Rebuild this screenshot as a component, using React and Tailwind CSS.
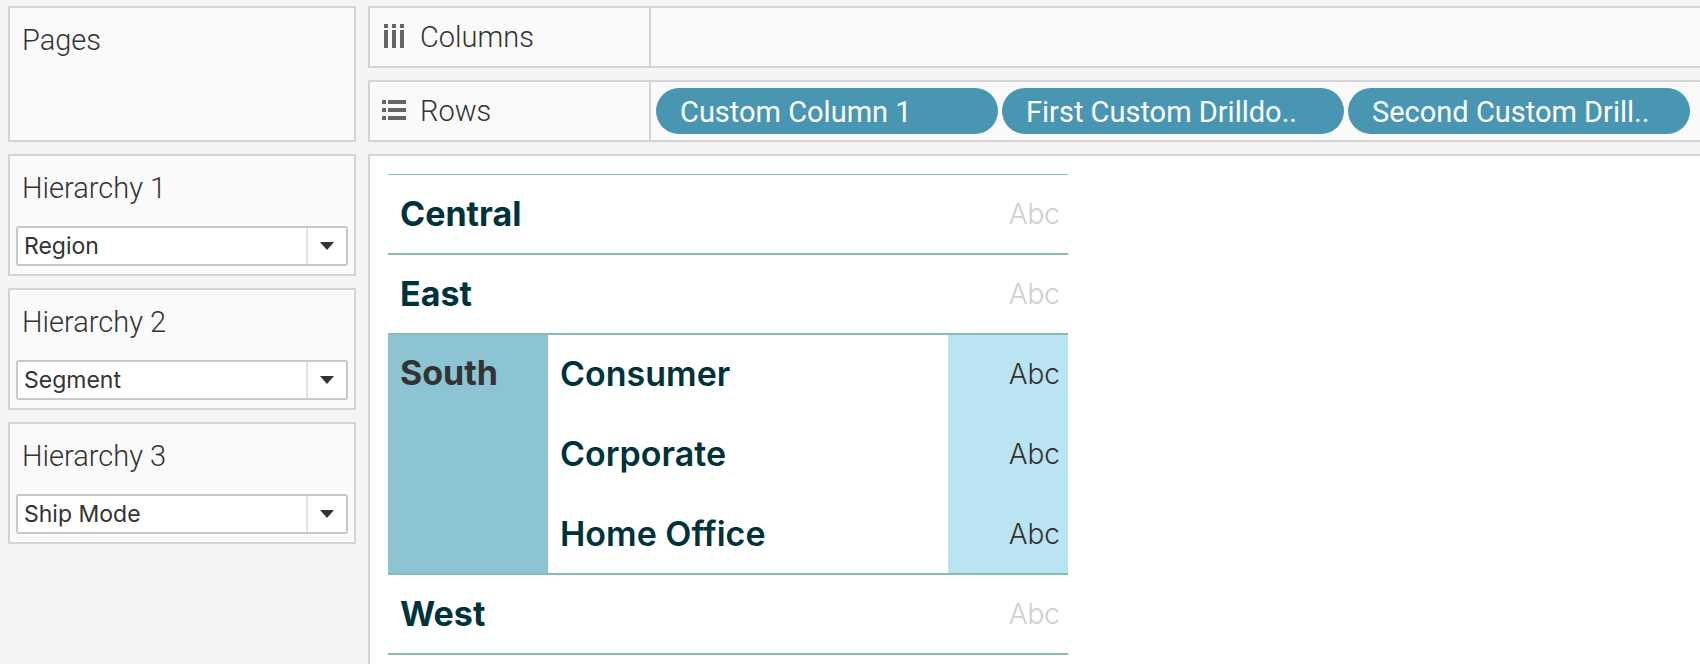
import React, { useState } from "react";

const filters = [
  {
    id: "hierarchy-1",
    label: "Hierarchy 1",
    value: "Region",
  },
  {
    id: "hierarchy-2",
    label: "Hierarchy 2",
    value: "Segment",
  },
  {
    id: "hierarchy-3",
    label: "Hierarchy 3",
    value: "Ship Mode",
  },
];

const options = ["Region", "Segment", "Ship Mode"];

const pills = [
  "Custom Column 1",
  "First Custom Drilldo..",
  "Second Custom Drill..",
];

const regions = [
  { name: "Central", segments: [] },
  { name: "East", segments: [] },
  { name: "South", segments: ["Consumer", "Corporate", "Home Office"] },
  { name: "West", segments: [] },
];

const ColumnsIcon = () => (
  <svg className="w-6 h-6 shrink-0" viewBox="0 0 24 24" fill="#636666">
    <path d="M2 0h4v4H2zM10 0h4v4h-4zM18 0h4v4h-4zM2 6h4v18H2zM10 6h4v18h-4zM18 6h4v18h-4z" />
  </svg>
);

const RowsIcon = () => (
  <svg className="w-6 h-6 shrink-0" viewBox="0 0 24 24" fill="#636666">
    <path d="M0 2h4v4H0zM0 10h4v4H0zM0 18h4v4H0zM6 2h18v4H6zM6 10h18v4H6zM6 18h18v4H6z" />
  </svg>
);

const Shelf = ({ icon, title, children }) => (
  <section className="flex h-[62px] border-2 border-r-0 border-[#d4d4d4] bg-[#fafafa]">
    <div className="flex w-[281px] shrink-0 items-center gap-3.5 border-r-2 border-[#d4d4d4] pb-0.5 pl-3">
      {icon}
      <h2 className="pt-0.5 text-[29px] leading-8 font-light">{title}</h2>
    </div>
    <div className="flex min-w-0 items-center gap-1 pl-[5px]">{children}</div>
  </section>
);

const FilterCard = ({ id, label, value }) => {
  const [selected, setSelected] = useState(value);

  return (
    <section className="border-2 border-[#d4d4d4] bg-[#fafafa] px-1.5 pb-2">
      <label
        htmlFor={id}
        className="block px-1.5 pt-4 pb-[22px] text-[29px] leading-8 font-light"
      >
        {label}
      </label>
      <div className="relative">
        <select
          id={id}
          value={selected}
          onChange={(e) => setSelected(e.target.value)}
          className="block h-10 w-full appearance-none rounded-[3px] border-2 border-[#c8c8c8] bg-white pr-12 pl-1.5 font-['Inter',sans-serif] text-[23px]"
        >
          {options.map((option) => (
            <option key={option}>{option}</option>
          ))}
        </select>
        {/* Arrow */}
        <div className="pointer-events-none absolute inset-y-0.5 right-0.5 flex w-10 items-center justify-center border-l-2 border-[#e2e2e2]">
          <svg className="h-2 w-3.5" viewBox="0 0 14 8" fill="#333333">
            <path d="M0 0h14L7 8z" />
          </svg>
        </div>
      </div>
    </section>
  );
};

const RegionRows = ({ name, segments }) => {
  if (segments.length === 0) {
    return (
      <tr className="h-20">
        <th
          colSpan={2}
          scope="row"
          className="border-b-2 border-[#86bcb6] px-3 text-left text-[34px] font-bold"
        >
          {name}
        </th>
        <td className="border-b-2 border-[#86bcb6] px-2 text-right text-[28px] font-light text-[#cfcfcf]">
          Abc
        </td>
      </tr>
    );
  }

  return segments.map((segment, i) => {
    const last = i === segments.length - 1;
    const line = last ? "border-b-2 border-[#86bcb6]" : "pb-0.5";
    return (
      <tr key={segment} className="h-20">
        {i === 0 && (
          <th
            rowSpan={segments.length}
            scope="rowgroup"
            className="border-b-2 border-[#86bcb6] bg-[#8cc4d3] px-3 pt-[18px] text-left align-top text-[34px] font-bold text-[#333333]"
          >
            {name}
          </th>
        )}
        <th
          scope="row"
          className={`px-3 text-left text-[34px] font-semibold ${line}`}
        >
          {segment}
        </th>
        <td
          className={`bg-[#bae4f2] px-2 text-right text-[28px] font-light text-[#333333] ${line}`}
        >
          Abc
        </td>
      </tr>
    );
  });
};

const App = () => {
  return (
    <div className="grid min-h-screen grid-cols-[348px_minmax(0,1fr)] grid-rows-[auto_1fr] gap-3 bg-[#f4f4f4] pt-1.5 pl-2 font-['Roboto',sans-serif] text-[#333333]">
      {/* Pages */}
      <section className="border-2 border-[#d4d4d4] bg-[#fafafa] px-3 pt-4">
        <h2 className="text-[29px] leading-8 font-light">Pages</h2>
      </section>

      {/* Shelves */}
      <div className="flex flex-col gap-3">
        <Shelf icon={<ColumnsIcon />} title="Columns" />
        <Shelf icon={<RowsIcon />} title="Rows">
          {pills.map((pill) => (
            <button
              key={pill}
              className="h-[46px] w-[342px] rounded-full bg-[#4996b2] px-6 pt-0.5 text-left text-[29px] leading-8 whitespace-nowrap text-white"
            >
              {pill}
            </button>
          ))}
        </Shelf>
      </div>

      {/* Hierarchy filters */}
      <aside className="flex flex-col gap-3">
        {filters.map((filter) => (
          <FilterCard key={filter.id} {...filter} />
        ))}
      </aside>

      {/* View */}
      <main className="border-t-2 border-l-2 border-[#d4d4d4] bg-white pt-[18px] pl-[18px]">
        <table className="w-[680px] table-fixed border-separate border-spacing-0 border-t border-[#86bcb6] font-['Inter',sans-serif] leading-10 text-[#00323c]">
          <colgroup>
            <col className="w-40" />
            <col />
            <col className="w-[120px]" />
          </colgroup>
          <tbody>
            {regions.map((region) => (
              <RegionRows key={region.name} {...region} />
            ))}
          </tbody>
        </table>
      </main>
    </div>
  );
};

export default App;
